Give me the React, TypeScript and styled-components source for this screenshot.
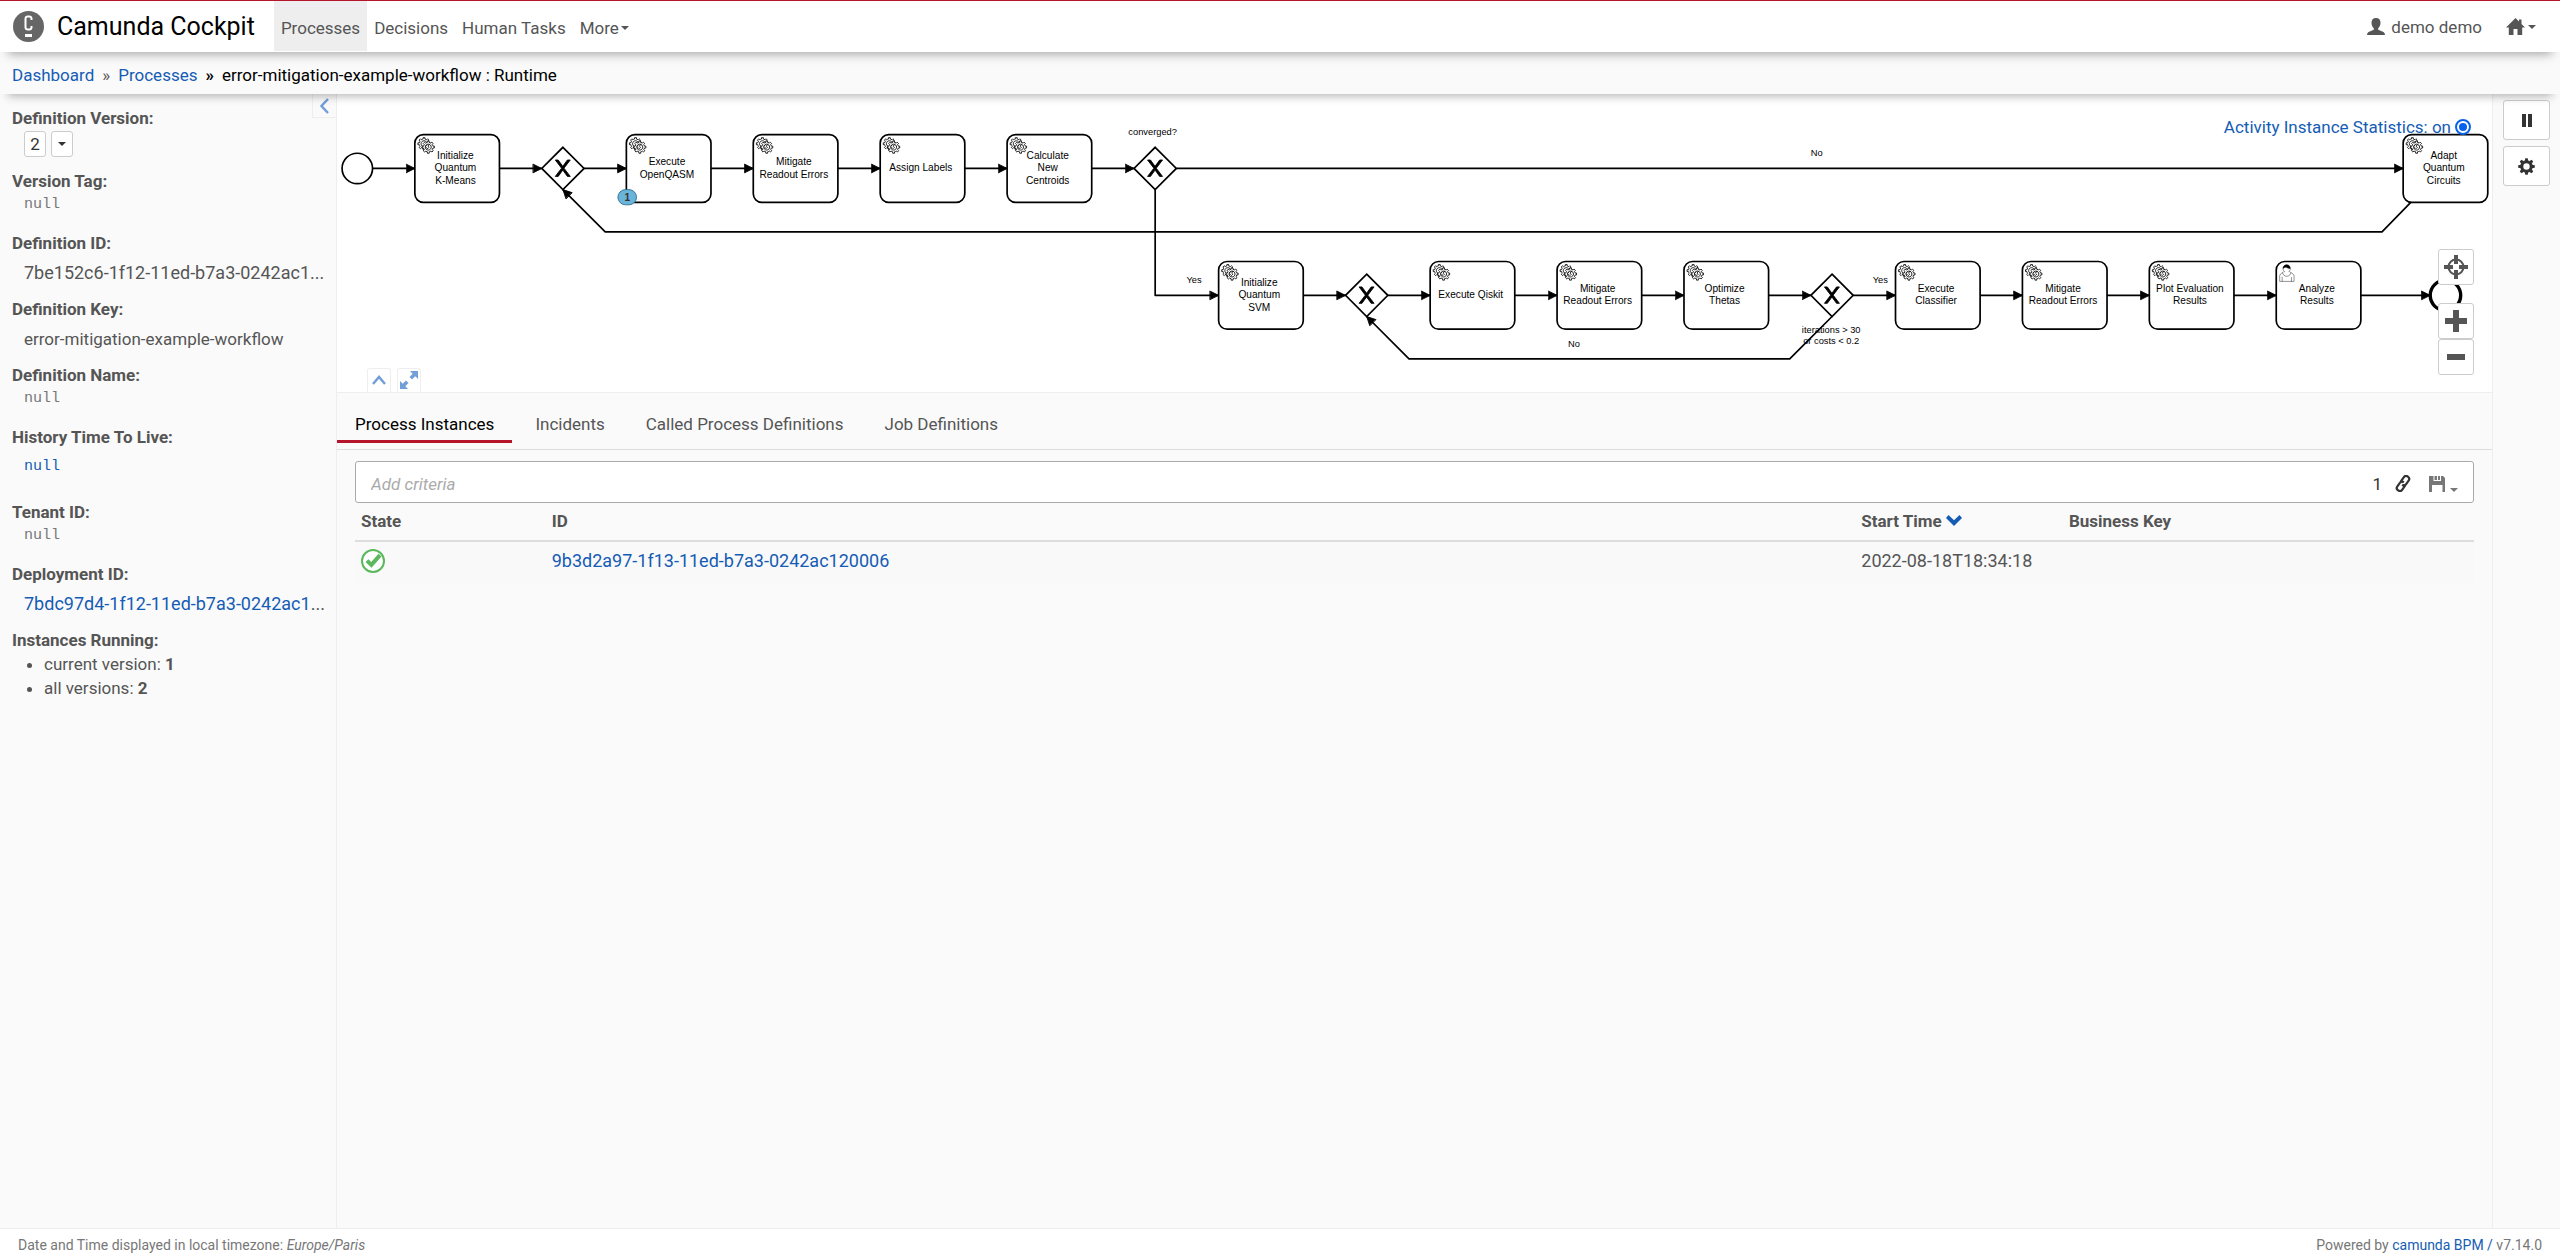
import React from "react";
import styled, { createGlobalStyle } from "styled-components";

const colors = {
  text: "#555",
  muted: "#777",
  link: "#155cb5",
  red: "#b5152b",
  panel: "#fafafa",
  line: "#eee",
};

const GlobalStyle = createGlobalStyle`
  *, *::before, *::after { box-sizing: border-box; }
  body {
    margin: 0;
    background: ${colors.panel};
    color: ${colors.text};
    font: 17px/24px Roboto, "Liberation Sans", sans-serif;
  }
  button, input { font: inherit; color: inherit; }
  button { cursor: pointer; padding: 0; }
  a { color: ${colors.link}; text-decoration: none; }
`;

const Page = styled.div`
  display: flex;
  flex-direction: column;
  min-height: 100vh;
`;

/* ---------- header ---------- */

const Header = styled.header`
  position: relative;
  z-index: 3;
  display: flex;
  align-items: stretch;
  height: 52px;
  padding-left: 13px;
  padding-right: 24px;
  background: #fff;
  border-top: 1px solid ${colors.red};
  box-shadow: 0 10px 10px -8px rgba(0, 0, 0, 0.35);
`;

const Brand = styled.a`
  display: flex;
  align-items: center;
  gap: 13px;
  margin-right: 19px;
  color: #000;
  font-size: 25px;
`;

const Nav = styled.nav`
  display: flex;
  flex: 1;
  padding-bottom: 1px;
`;

const NavItem = styled.a<{ $active?: boolean }>`
  display: flex;
  align-items: center;
  gap: 2px;
  padding: 3px 7px 0;
  color: ${colors.text};
  background: ${(p) => (p.$active ? "#eee" : "transparent")};
`;

const UserArea = styled.div`
  display: flex;
  align-items: center;
  gap: 24px;
`;

const PlainButton = styled.button<{ $gap?: number; $muted?: boolean }>`
  display: flex;
  align-items: ${(p) => (p.$muted ? "flex-end" : "center")};
  gap: ${(p) => p.$gap ?? 0}px;
  border: 0;
  background: none;
  color: ${(p) => (p.$muted ? colors.muted : "inherit")};
`;

const Caret = styled.span`
  display: inline-block;
  border: 4px solid transparent;
  border-top-color: currentColor;
  border-bottom: 0;
`;

const Breadcrumbs = styled.nav`
  position: relative;
  z-index: 2;
  display: flex;
  align-items: center;
  gap: 8px;
  height: 42px;
  padding: 4px 12px 0;
  background: ${colors.panel};
  color: #000;
  box-shadow: 0 10px 10px -8px rgba(0, 0, 0, 0.3);
`;

const Separator = styled.span<{ $dark?: boolean }>`
  color: ${(p) => (p.$dark ? "#000" : colors.text)};
  font-weight: ${(p) => (p.$dark ? "bold" : "normal")};
`;

/* ---------- body ---------- */

const Body = styled.div`
  display: flex;
  flex: 1;
`;

const Sidebar = styled.aside`
  position: relative;
  display: flex;
  flex-direction: column;
  gap: 12px;
  width: 337px;
  flex: none;
  padding: 12px 6px 12px 12px;
  border-right: 1px solid ${colors.line};
`;

const Collapse = styled.button`
  position: absolute;
  top: 0;
  right: 0;
  width: 24px;
  height: 24px;
  display: grid;
  place-items: center;
  border: 1px solid ${colors.line};
  border-width: 0 0 1px 1px;
  background: ${colors.panel};
`;

const Label = styled.div`
  font-weight: bold;
`;

const Value = styled.div<{ $roomy?: boolean; $tall?: boolean }>`
  padding: ${(p) => (p.$roomy ? "6px" : "0")} 0 ${(p) => (p.$tall ? "9px" : p.$roomy ? "0" : "2px")} 12px;
  white-space: nowrap;
`;

const Code = styled.span`
  font-size: 18px;
`;

const Mono = styled.span<{ $link?: boolean }>`
  display: block;
  font-family: "Liberation Mono", monospace;
  font-size: 15px;
  color: ${(p) => (p.$link ? colors.link : colors.muted)};
`;

const VersionRow = styled.div`
  display: flex;
  gap: 5px;
  padding: 1px 0 0 12px;
`;

const VersionButton = styled.button`
  display: grid;
  place-items: center;
  width: 22px;
  height: 26px;
  border: 1px solid #ccc;
  border-radius: 3px;
  background: #fff;
  color: #333;
`;

const CountList = styled.ul`
  margin: 0;
  padding-left: 32px;
`;

const Main = styled.main`
  flex: 1;
  min-width: 0;
`;

const Actions = styled.aside`
  display: flex;
  flex-direction: column;
  gap: 6px;
  flex: none;
  width: 68px;
  padding: 6px 10px;
  border-left: 1px solid ${colors.line};
`;

const ActionButton = styled.button`
  display: grid;
  place-items: center;
  height: 40px;
  border: 1px solid #ccc;
  border-radius: 3px;
  background: #fff;
  color: #333;
`;

/* ---------- diagram ---------- */

const DiagramPanel = styled.section`
  position: relative;
  height: 299px;
  background: #fff;
  border-bottom: 1px solid ${colors.line};
`;

const DiagramSvg = styled.svg`
  display: block;
  width: 100%;
  height: 298px;
  font-family: "Liberation Sans", Arial, sans-serif;
`;

const StatsToggle = styled.button`
  position: absolute;
  top: 21px;
  right: 21px;
  display: flex;
  align-items: center;
  gap: 4px;
  border: 0;
  background: none;
  color: ${colors.link};
`;

const ZoomControls = styled.div`
  position: absolute;
  right: 18px;
  bottom: 17px;
  display: flex;
  flex-direction: column;
`;

const ZoomButton = styled.button<{ $apart?: boolean }>`
  display: grid;
  place-items: center;
  width: 36px;
  height: 36px;
  margin-bottom: ${(p) => (p.$apart ? 18 : 0)}px;
  border: 1px solid #ccc;
  border-radius: 3px;
  background: #fff;
  color: ${colors.text};
`;

const PanelTools = styled.div`
  position: absolute;
  left: 30px;
  bottom: 0;
  display: flex;
  gap: 6px;
`;

const PanelTool = styled.button`
  display: grid;
  place-items: center;
  width: 24px;
  height: 24px;
  padding-bottom: 2px;
  border: 1px solid ${colors.line};
  border-bottom: 0;
  border-radius: 3px 3px 0 0;
  background: #fff;
`;

/* ---------- instances ---------- */

const Tabs = styled.div`
  display: flex;
  gap: 5px;
  height: 57px;
  padding-bottom: 6px;
  border-bottom: 1px solid #ddd;
`;

const Tab = styled.button<{ $active?: boolean }>`
  padding: 14px 18px 0;
  border: 0;
  border-bottom: 3px solid ${(p) => (p.$active ? colors.red : "transparent")};
  background: none;
  color: ${(p) => (p.$active ? "#000" : colors.text)};
`;

const Content = styled.section`
  padding: 11px 18px;
`;

const SearchBox = styled.div`
  display: flex;
  align-items: center;
  height: 42px;
  padding: 3px 15px 0;
  border: 1px solid #aaa;
  border-radius: 3px;
  background: #fff;
`;

const SearchInput = styled.input`
  flex: 1;
  min-width: 0;
  padding: 0;
  border: 0;
  outline: 0;
  background: none;
  &::placeholder { color: #aaa; opacity: 1; font-style: italic; }
`;

const SearchTools = styled.div`
  display: flex;
  align-items: center;
  color: #333;
  gap: 18px;
`;

const Total = styled.div`
  display: flex;
  align-items: center;
  gap: 13px;
`;

const Table = styled.table`
  width: 100%;
  table-layout: fixed;
  border-collapse: collapse;
  text-align: left;
`;

const Th = styled.th<{ $width?: string }>`
  width: ${(p) => p.$width ?? "auto"};
  height: 38px;
  padding: 0 6px 2px;
  border-bottom: 2px solid #ddd;
`;

const ThInner = styled.span`
  display: inline-flex;
  align-items: center;
  gap: 4px;
`;

const Td = styled.td`
  height: 42px;
  padding: 0 6px 4px;
  background: #f9f9f9;
  font-size: 18px;
  svg { display: block; }
`;

const Footer = styled.footer`
  display: flex;
  justify-content: space-between;
  align-items: center;
  height: 30px;
  padding: 2px 18px 0;
  border-top: 1px solid ${colors.line};
  background: #fff;
  color: ${colors.muted};
  font-size: 14px;
`;

/* ---------- icons ---------- */

const Logo = () => (
  <svg width="31" height="31" viewBox="0 0 31 31" aria-hidden="true">
    <circle cx="15.500" cy="15.500" r="15.500" fill="#666" />
    <path d="M18.500 9V7.500A2.200 2.200 0 0 0 16.300 5.500H14.700A2.200 2.200 0 0 0 12.500 7.500V16.500A2.200 2.200 0 0 0 14.700 18.500H16.300A2.200 2.200 0 0 0 18.500 16.500V15" fill="none" stroke="#fff" strokeWidth="2" />
    <rect x="12" y="23" width="7" height="3" fill="#fff" />
  </svg>
);

const UserIcon = () => (
  <svg width="18" height="17" viewBox="0 0 18 17" fill="currentColor" aria-hidden="true">
    <path d="M9 0C6 0 4.500 2 4.500 4.700 4.500 7.500 5.500 9 6.800 10.200V11.800L1.500 14Q0 14.800 0 17H18Q18 14.800 16.500 14L11.200 11.800V10.200C12.500 9 13.500 7.500 13.500 4.700 13.500 2 12 0 9 0Z" />
  </svg>
);

const HomeIcon = () => (
  <svg width="19" height="17" viewBox="0 0 19 17" fill="currentColor" aria-hidden="true">
    <path d="M9.500 0 13 3.500V1.500H15.500V6L19 9.500H16.200V17H11.500V11H7.500V17H2.800V9.500H0Z" />
  </svg>
);

const Chevron = ({ up }: { up?: boolean }) => (
  <svg width="14" height="16" viewBox="0 0 14 16" fill="none" stroke="#729fd8" strokeWidth="2.500" aria-hidden="true">
    <path d={up ? "M1 12 7 5 13 12" : "M10 1 3.500 8 10 15"} />
  </svg>
);

const ExpandIcon = () => (
  <svg width="18" height="18" viewBox="0 0 18 18" fill="#729fd8" aria-hidden="true">
    <path d="M10 0H18V8L15.300 5.300 12 8.500 9.500 6 12.700 2.700ZM8 18H0V10L2.700 12.700 6 9.500 8.500 12 5.300 15.300Z" />
  </svg>
);

const PauseIcon = () => (
  <svg width="10" height="13" viewBox="0 0 10 13" fill="currentColor" aria-hidden="true">
    <path d="M0 0H4V13H0ZM6 0H10V13H6Z" />
  </svg>
);

const CogIcon = () => (
  <svg width="17" height="17" viewBox="-8.500 -8.500 17 17" aria-hidden="true">
    <circle r="4.700" fill="none" stroke="currentColor" strokeWidth="3" />
    {[0, 45, 90, 135, 180, 225, 270, 315].map((a) => (
      <path key={a} d="M-1.800 -5.500 -1.200 -8.300H1.200L1.800 -5.500Z" fill="currentColor" transform={`rotate(${a})`} />
    ))}
  </svg>
);

const TargetIcon = () => (
  <svg width="24" height="24" viewBox="0 0 24 24" fill="none" stroke="currentColor" aria-hidden="true">
    <circle cx="12" cy="12" r="7.500" strokeWidth="2" />
    <path d="M12 0V9M12 15V24M0 12H9M15 12H24" strokeWidth="4" />
  </svg>
);

const PlusIcon = ({ minus }: { minus?: boolean }) => (
  <svg width="22" height="22" viewBox="0 0 22 22" fill="none" stroke="currentColor" strokeWidth="6" aria-hidden="true">
    <path d={minus ? "M2 11H20" : "M0 11H22M11 0V22"} />
  </svg>
);

const RadioOnIcon = () => (
  <svg width="16" height="16" viewBox="0 0 16 16" aria-hidden="true">
    <circle cx="8" cy="8" r="7" fill="#fff" stroke="#0a62ea" strokeWidth="2" />
    <circle cx="8" cy="8" r="4" fill="#0a62ea" />
  </svg>
);

const LinkIcon = () => (
  <svg width="16" height="17" viewBox="0 0 16 17" fill="none" stroke="currentColor" strokeWidth="2.200" aria-hidden="true">
    <g transform="rotate(-55 8 8.500)">
      <path d="M8 11.500H2.500A3 3 0 0 1 2.500 5.500H6.500A3 3 0 0 1 9.500 8.500M8 5.500H13.500A3 3 0 0 1 13.500 11.500H9.500A3 3 0 0 1 6.500 8.500" />
    </g>
  </svg>
);

const SaveIcon = () => (
  <svg width="16" height="16" viewBox="0 0 16 16" fill="currentColor" aria-hidden="true">
    <path fillRule="evenodd" d="M0 0H4.500V5H12V0H14L16 2V16H13.500V9H3V16H0ZM9 0H11V4H9ZM5.500 0H8V4H5.500Z" />
  </svg>
);

const SortIcon = () => (
  <svg width="16" height="11" viewBox="0 0 16 11" fill={colors.link} aria-hidden="true">
    <path d="M2.500 0 8 5.200 13.500 0 16 3 8 11 0 3Z" />
  </svg>
);

const CheckIcon = () => (
  <svg width="24" height="24" viewBox="0 0 24 24" role="img" aria-label="Running">
    <circle cx="12" cy="12" r="11" fill="#fff" stroke="#5cb85c" strokeWidth="2" />
    <path d="M4.500 13 7.500 10.200 10.200 13 17.500 4.800 20.500 7.500 10.500 18.800Z" fill="#5cb85c" />
  </svg>
);

/* ---------- BPMN ---------- */

const GEAR =
  "v -1.71335 c 0.352326,-0.0705 0.703932,-0.17838 1.047628,-0.32133 0.344416,-0.14465 0.665822,-0.32133 0.966377,-0.52145 l 1.19431,1.18005 1.567487,-1.57688 -1.195028,-1.18014 c 0.403376,-0.61394 0.683079,-1.29908 0.825447,-2.01824 l 1.622133,-0.01 v -2.2196 l -1.636514,0.01 c -0.07333,-0.35153 -0.178319,-0.70024 -0.323564,-1.04372 -0.145244,-0.34406 -0.321407,-0.6644 -0.522735,-0.96217 l 1.131035,-1.13631 -1.583305,-1.56293 -1.129598,1.13589 c -0.614052,-0.40108 -1.302883,-0.68093 -2.022633,-0.82247 l 0.0093,-1.61852 h -2.241173 l 0.0042,1.63124 c -0.353763,0.0736 -0.705369,0.17977 -1.049785,0.32371 -0.344415,0.14437 -0.665102,0.32092 -0.9635006,0.52006 l -1.1698628,-1.15823 -1.5667691,1.5792 1.1684265,1.15669 c -0.4026573,0.61283 -0.68308,1.29797 -0.8247287,2.01713 l -1.6588041,0.003 v 2.22174 l 1.6724648,-0.006 c 0.073327,0.35077 0.1797598,0.70243 0.3242851,1.04472 0.1452428,0.34448 0.3214064,0.6644 0.5227339,0.96066 l -1.1993431,1.19723 1.5840256,1.56011 1.1964668,-1.19348 c 0.6140517,0.40346 1.3028827,0.68232 2.0233517,0.82331 l 7.19e-4,1.69892 h 2.226848 z m 0.221462,-3.9957 c -1.788948,0.7502 -3.8576,-0.0928 -4.6097055,-1.87438 -0.7521065,-1.78321 0.090598,-3.84627 1.8802645,-4.59604 1.78823,-0.74936 3.856881,0.0929 4.608987,1.87437 0.752106,1.78165 -0.0906,3.84612 -1.879546,4.59605 z";

const GearsMark = () => (
  <g fill="#fff" stroke="#000" strokeWidth="1">
    <path d={`m 12,18 ${GEAR}`} />
    <path d={`m 17,22 ${GEAR}`} />
  </g>
);

const UserMark = () => (
  <g fill="#fff" stroke="#000" strokeWidth="0.500">
    <path d="m 15,12 c 0.909,-0.845 1.594,-2.049 1.594,-3.385 0,-2.554 -1.805,-4.622 -4.357,-4.622 -2.552,0 -4.288,2.068 -4.288,4.622 0,1.348 0.974,2.562 1.896,3.405 -0.529,0.187 -5.669,2.097 -5.794,4.756 v 6.718 h 17 v -6.718 c 0,-2.298 -5.528,-4.595 -6.051,-4.776 z m -8,6 l 0,5.500 m 11,0 l 0,-5" />
    <path d="m 15,12 m 2.162,1.009 c 0,2.447 -2.158,4.431 -4.821,4.431 -2.665,0 -4.822,-1.981 -4.822,-4.431" />
    <path d="m 15,12 m -6.900,-3.800 c 0,0 2.251,-2.358 4.274,-1.177 2.024,1.181 4.221,1.537 4.124,0.965 -0.098,-0.570 -0.117,-3.791 -4.191,-4.136 -3.572,0.001 -4.208,3.670 -4.207,4.348 z" fill="#000" />
  </g>
);

type TaskData = { x: number; y: number; lines: string[]; user?: boolean };

const tasks: TaskData[] = [
  { x: 0, y: 0, lines: ["Initialize", "Quantum", "K-Means"] },
  { x: 250, y: 0, lines: ["Execute", "OpenQASM"] },
  { x: 400, y: 0, lines: ["Mitigate", "Readout Errors"] },
  { x: 550, y: 0, lines: ["Assign Labels"] },
  { x: 700, y: 0, lines: ["Calculate", "New", "Centroids"] },
  { x: 2350, y: 0, lines: ["Adapt", "Quantum", "Circuits"] },
  { x: 950, y: 150, lines: ["Initialize", "Quantum", "SVM"] },
  { x: 1200, y: 150, lines: ["Execute Qiskit"] },
  { x: 1350, y: 150, lines: ["Mitigate", "Readout Errors"] },
  { x: 1500, y: 150, lines: ["Optimize", "Thetas"] },
  { x: 1750, y: 150, lines: ["Execute", "Classifier"] },
  { x: 1900, y: 150, lines: ["Mitigate", "Readout Errors"] },
  { x: 2050, y: 150, lines: ["Plot Evaluation", "Results"] },
  { x: 2200, y: 150, lines: ["Analyze", "Results"], user: true },
];

const gateways = [
  { x: 150, y: 15 },
  { x: 850, y: 15 },
  { x: 1100, y: 165 },
  { x: 1650, y: 165 },
];

const flows = [
  "-50,40 0,40",
  "100,40 150,40",
  "200,40 250,40",
  "350,40 400,40",
  "500,40 550,40",
  "650,40 700,40",
  "800,40 850,40",
  "900,40 2350,40",
  "2359,80 2325,115 225,115 175,65",
  "875,65 875,190 950,190",
  "1050,190 1100,190",
  "1150,190 1200,190",
  "1300,190 1350,190",
  "1450,190 1500,190",
  "1600,190 1650,190",
  "1700,190 1750,190",
  "1675,215 1625,265 1175,265 1125,215",
  "1850,190 1900,190",
  "2000,190 2050,190",
  "2150,190 2200,190",
  "2300,190 2382,190",
];

const labels = [
  { x: 872, y: 0, text: "converged?" },
  { x: 1657, y: 25, text: "No" },
  { x: 921, y: 175, text: "Yes" },
  { x: 1732, y: 175, text: "Yes" },
  { x: 1370, y: 251, text: "No" },
  { x: 1674, y: 234, text: "iterations > 30" },
  { x: 1674, y: 247, text: "or costs < 0.2" },
];

const Task = ({ x, y, lines, user }: TaskData) => (
  <g transform={`translate(${x} ${y})`}>
    <rect width="100" height="80" rx="10" fill="#fff" stroke="#000" strokeWidth="2" />
    {user ? <UserMark /> : <GearsMark />}
    {lines.map((line, i) => (
      <text key={line} x="48" y={43.5 + (i - (lines.length - 1) / 2) * 14.4} fontSize="12" textAnchor="middle">
        {line}
      </text>
    ))}
  </g>
);

const Diagram = () => (
  <DiagramSvg viewBox="-92 -48 2547 352" preserveAspectRatio="xMinYMin meet" role="img" aria-label="Process diagram">
    <defs>
      <marker id="flow-end" viewBox="0 0 20 20" refX="11" refY="10" markerWidth="10" markerHeight="10" orient="auto">
        <path d="M 1 5 L 11 10 L 1 15 Z" stroke="#000" strokeLinecap="round" />
      </marker>
    </defs>
    <circle cx="-68" cy="40" r="18" fill="#fff" stroke="#000" strokeWidth="2" />
    <circle cx="2400" cy="190" r="18" fill="#fff" stroke="#000" strokeWidth="4" />
    {gateways.map((g) => (
      <g key={g.x} transform={`translate(${g.x} ${g.y})`}>
        <path d="M25 0 50 25 25 50 0 25Z" fill="#fff" stroke="#000" strokeWidth="2" />
        <path
          d="m 16,15 7.428,9.714 -7.428,9.714 3.428,0 5.428,-7.465 5.428,7.465 3.428,0 -7.428,-9.714 7.428,-9.714 -3.428,0 -5.428,7.465 -5.429,-7.465 -3.430,0 z"
          stroke="#000"
        />
      </g>
    ))}
    {tasks.map((t) => (
      <Task key={`${t.x}-${t.y}`} {...t} />
    ))}
    {flows.map((points) => (
      <polyline key={points} points={points} fill="none" stroke="#000" strokeWidth="2" strokeLinejoin="round" markerEnd="url(#flow-end)" />
    ))}
    {labels.map((l) => (
      <text key={`${l.x}-${l.y}`} x={l.x} y={l.y} fontSize="11" textAnchor="middle">
        {l.text}
      </text>
    ))}
    <rect x="240" y="65" width="22" height="18" rx="9" fill="#6bb4d9" stroke="#23678a" />
    <text x="251" y="78" fontSize="12" fontWeight="bold" fill="#333" textAnchor="middle">
      1
    </text>
  </DiagramSvg>
);

/* ---------- page ---------- */

export default function App() {
  return (
    <Page>
      <GlobalStyle />
      <Header>
        <Brand href="#">
          <Logo />
          Camunda Cockpit
        </Brand>
        <Nav>
          <NavItem href="#" $active>Processes</NavItem>
          <NavItem href="#">Decisions</NavItem>
          <NavItem href="#">Human Tasks</NavItem>
          <NavItem href="#">
            More
            <Caret />
          </NavItem>
        </Nav>
        <UserArea>
          <PlainButton $gap={6}>
            <UserIcon />
            demo demo
          </PlainButton>
          <PlainButton $gap={3} aria-label="Apps">
            <HomeIcon />
            <Caret />
          </PlainButton>
        </UserArea>
      </Header>
      <Breadcrumbs>
        <a href="#">Dashboard</a>
        <Separator>»</Separator>
        <a href="#">Processes</a>
        <Separator $dark>»</Separator>
        <span>error-mitigation-example-workflow : Runtime</span>
      </Breadcrumbs>

      <Body>
        <Sidebar>
          <Collapse aria-label="Collapse sidebar"><Chevron /></Collapse>
          <div>
            <Label>Definition Version:</Label>
            <VersionRow>
              <VersionButton>2</VersionButton>
              <VersionButton aria-label="Choose version"><Caret /></VersionButton>
            </VersionRow>
          </div>
          <div>
            <Label>Version Tag:</Label>
            <Value><Mono>null</Mono></Value>
          </div>
          <div>
            <Label>Definition ID:</Label>
            <Value $roomy><Code>7be152c6-1f12-11ed-b7a3-0242ac1...</Code></Value>
          </div>
          <div>
            <Label>Definition Key:</Label>
            <Value $roomy>error-mitigation-example-workflow</Value>
          </div>
          <div>
            <Label>Definition Name:</Label>
            <Value><Mono>null</Mono></Value>
          </div>
          <div>
            <Label>History Time To Live:</Label>
            <Value $roomy $tall><a href="#"><Mono $link>null</Mono></a></Value>
          </div>
          <div>
            <Label>Tenant ID:</Label>
            <Value><Mono>null</Mono></Value>
          </div>
          <div>
            <Label>Deployment ID:</Label>
            <Value $roomy><Code><a href="#">7bdc97d4-1f12-11ed-b7a3-0242ac1</a>...</Code></Value>
          </div>
          <div>
            <Label>Instances Running:</Label>
            <CountList>
              <li>current version: <b>1</b></li>
              <li>all versions: <b>2</b></li>
            </CountList>
          </div>
        </Sidebar>

        <Main>
          <DiagramPanel>
            <StatsToggle>
              Activity Instance Statistics: on
              <RadioOnIcon />
            </StatsToggle>
            <Diagram />
            <PanelTools>
              <PanelTool aria-label="Collapse diagram"><Chevron up /></PanelTool>
              <PanelTool aria-label="Maximize diagram"><ExpandIcon /></PanelTool>
            </PanelTools>
            <ZoomControls>
              <ZoomButton $apart aria-label="Reset zoom"><TargetIcon /></ZoomButton>
              <ZoomButton aria-label="Zoom in"><PlusIcon /></ZoomButton>
              <ZoomButton aria-label="Zoom out"><PlusIcon minus /></ZoomButton>
            </ZoomControls>
          </DiagramPanel>
          <Tabs>
            <Tab $active>Process Instances</Tab>
            <Tab>Incidents</Tab>
            <Tab>Called Process Definitions</Tab>
            <Tab>Job Definitions</Tab>
          </Tabs>
          <Content>
            <SearchBox>
              <SearchInput aria-label="Add criteria" placeholder="Add criteria" />
              <SearchTools>
                <Total>
                  1
                  <PlainButton aria-label="Copy link"><LinkIcon /></PlainButton>
                </Total>
                <PlainButton $gap={5} $muted aria-label="Saved searches">
                  <SaveIcon />
                  <Caret />
                </PlainButton>
              </SearchTools>
            </SearchBox>
            <Table>
              <thead>
                <tr>
                  <Th $width="9%">State</Th>
                  <Th>ID</Th>
                  <Th $width="9.8%"><ThInner>Start Time <SortIcon /></ThInner></Th>
                  <Th $width="19.4%">Business Key</Th>
                </tr>
              </thead>
              <tbody>
                <tr>
                  <Td><CheckIcon /></Td>
                  <Td><a href="#">9b3d2a97-1f13-11ed-b7a3-0242ac120006</a></Td>
                  <Td>2022-08-18T18:34:18</Td>
                  <Td />
                </tr>
              </tbody>
            </Table>
          </Content>
        </Main>

        <Actions>
          <ActionButton aria-label="Suspend"><PauseIcon /></ActionButton>
          <ActionButton aria-label="Settings"><CogIcon /></ActionButton>
        </Actions>
      </Body>

      <Footer>
        <span>Date and Time displayed in local timezone: <i>Europe/Paris</i></span>
        <span>Powered by <a href="#">camunda BPM /</a> v7.14.0</span>
      </Footer>
    </Page>
  );
}
